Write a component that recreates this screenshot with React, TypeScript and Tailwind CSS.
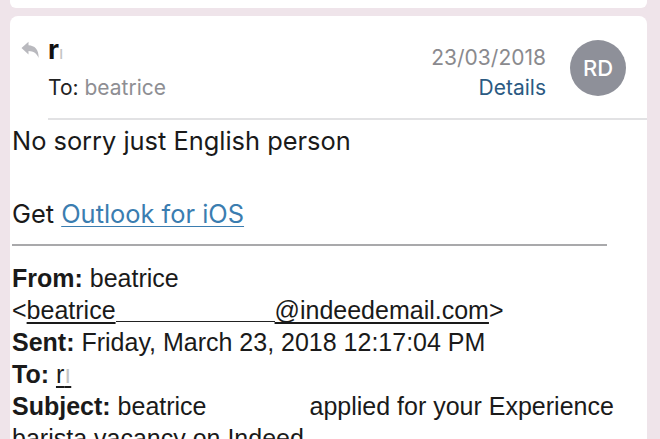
import React from "react";

const sf = { fontFamily: "Inter, 'Noto Sans', sans-serif" };
const hv = { fontFamily: "'Liberation Sans', Arial, sans-serif" };

function ReplyIcon() {
  return (
    <svg width="19" height="18" viewBox="0 0 19 18" fill="none">
      <path
        d="M0.5 7 L7.5 0.8 L7.5 4.3 C13.5 4.5 18 8.5 17.6 17 C15.8 12.2 12.6 10.2 7.5 10 L7.5 13.4 Z"
        fill="#b9b9be"
      />
    </svg>
  );
}

function Gap({ w }: { w: number }) {
  return <span className="inline-block h-[1.5px] bg-[#222] -mb-[3px]" style={{ width: w }} />;
}

export default function App() {
  return (
    <div className="w-[660px] h-[439px] overflow-hidden bg-[#efe4ea] relative">
      <div className="ml-[10px] w-[637px] h-[8px] bg-white rounded-b-[6px]" />
      <div className="ml-[10px] mt-[8px] w-[637px] h-[500px] bg-white rounded-t-[8px]">
        <div className="flex h-[102px]">
          <div className="w-[38px] pt-[25px] pl-[11px]">
            <ReplyIcon />
          </div>
          <div className="flex-1 pt-[21px]" style={sf}>
            <div className="h-[26px] leading-[26px] text-[27px] font-bold text-[#111]">
              r<span className="text-[#c4c4c4] font-normal text-[18px]">ı</span>
            </div>
            <div className="mt-[12px] h-[26px] leading-[26px] text-[21px] text-[#222]">
              To: <span className="text-[#8e8e93]">beatrice</span>
            </div>
          </div>
          <div className="pt-[30px] text-right" style={sf}>
            <div className="h-[24px] leading-[24px] text-[21px] text-[#8a8a8e]">23/03/2018</div>
            <div className="mt-[6px] h-[24px] leading-[24px] text-[21px] text-[#2b5a82]">Details</div>
          </div>
          <div
            className="ml-[24px] mr-[21px] mt-[24px] w-[56px] h-[56px] rounded-full bg-[#8e9099] flex items-center justify-center text-white text-[22px] font-medium"
            style={sf}
          >
            RD
          </div>
        </div>
        <div className="ml-[38px] h-[2px] bg-[#e2e2e4]" />
        <div className="pl-[2px]">
          <div className="mt-[6px] h-[30px] leading-[30px] text-[25.4px] text-[#1a1a1a]" style={sf}>
            No sorry just English person
          </div>
          <div className="mt-[43px] h-[30px] leading-[30px] text-[25.4px] text-[#1a1a1a]" style={sf}>
            Get <span className="text-[#3b7db0] underline decoration-1 underline-offset-[3px]">Outlook for iOS</span>
          </div>
          <div className="mt-[15px] w-[595px] h-[2px] bg-[#a9a9ab]" />
          <div className="mt-[16px] text-[25px] leading-[32px] text-[#1a1a1a]" style={hv}>
            <div>
              <b>From:</b> beatrice
            </div>
            <div>
              &lt;<span className="underline decoration-[1.5px] underline-offset-[3px]">beatrice</span>
              <Gap w={159} />
              <span className="underline decoration-[1.5px] underline-offset-[3px]">@indeedemail.com</span>&gt;
            </div>
            <div>
              <b>Sent:</b> Friday, March 23, 2018 12:17:04 PM
            </div>
            <div>
              <b>To:</b>{" "}
              <span className="underline decoration-[1.5px] underline-offset-[3px]">
                r<span className="text-[#c4c4c4]">ı</span>
              </span>
            </div>
            <div>
              <b>Subject:</b> beatrice<span className="inline-block w-[103px]" />applied for your Experience
            </div>
            <div>barista vacancy on Indeed</div>
          </div>
        </div>
      </div>
    </div>
  );
}
